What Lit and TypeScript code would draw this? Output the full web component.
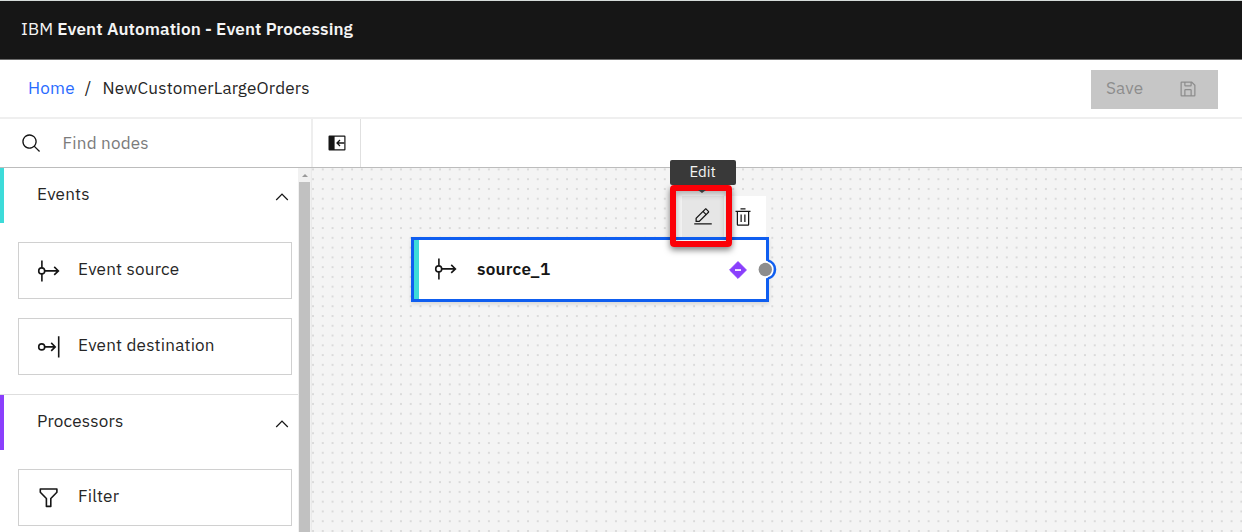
import { LitElement, html, css, svg } from "lit";
import { customElement } from "lit/decorators.js";

const searchIcon = html`<svg class="i-search" viewBox="0 0 32 32"><path d="M29,27.5859l-7.5521-7.5521a11.0177,11.0177,0,1,0-1.4141,1.4141L27.5859,29ZM4,13a9,9,0,1,1,9,9A9.01,9.01,0,0,1,4,13Z"/></svg>`;
const saveIcon = html`<svg class="i-save" viewBox="0 0 32 32"><path d="M27.71,9.29l-5-5A1,1,0,0,0,22,4H6A2,2,0,0,0,4,6V26a2,2,0,0,0,2,2H26a2,2,0,0,0,2-2V10A1,1,0,0,0,27.71,9.29ZM12,6h8v4H12Zm8,20H12V18h8Zm2,0V18a2,2,0,0,0-2-2H12a2,2,0,0,0-2,2v8H6V6h4v4a2,2,0,0,0,2,2h8a2,2,0,0,0,2-2V6.41l4,4V26Z"/></svg>`;
const editIcon = html`<svg class="i-tool" viewBox="0 0 32 32"><path d="M2 26H30V28H2zM25.4 9c.8-.8.8-2 0-2.8l-3.6-3.6c-.8-.8-2-.8-2.8 0l-15 15V24h6.4L25.4 9zM20.4 4L24 7.6l-3 3L17.4 7 20.4 4zM6 22v-3.6l10-10 3.6 3.6-10 10H6z"/></svg>`;
const trashIcon = html`<svg class="i-tool" viewBox="0 0 32 32"><path d="M12 12H14V24H12zM18 12H20V24H18zM4 6V8H6V28a2 2 0 002 2H24a2 2 0 002-2V8h2V6zM8 28V8H24V28zM12 2H20V4H12z"/></svg>`;
const chevronUp = html`<svg class="i-chevron" viewBox="0 0 16 16"><path d="M8 5L13 10 12.3 10.7 8 6.4 3.7 10.7 3 10z"/></svg>`;
const panelIcon = html`<svg class="i-panel" viewBox="0 0 18 16"><path d="M1.5 0.5h15a1 1 0 0 1 1 1v13a1 1 0 0 1-1 1h-15a1 1 0 0 1-1-1v-13a1 1 0 0 1 1-1zM6.6 1.7v12.6h9.7V1.7z" fill-rule="evenodd"/><path d="M16.3 8H9.2M12 5L9 8l3 3" fill="none" stroke="#161616" stroke-width="1.3"/></svg>`;

const glyphs = {
  source: svg`<path d="M5.9 2.5v7.2M5.9 15.9v7.6M9 12.9h13.3M18.2 8.9l4.2 4-4.2 4"/><circle cx="5.7" cy="12.9" r="3"/>`,
  destination: svg`<path d="M8.8 12.9h9.8M15.2 8.9l4 4-4 4M22.7 2.3v21.3"/><circle cx="5.7" cy="12.9" r="3"/>`,
  filter: svg`<path d="M4.3 4h16.6v3.3l-6.1 6.2v7.9H10.4v-7.9L4.3 7.3z" stroke-linejoin="round"/>`,
};
type Glyph = keyof typeof glyphs;
const glyph = (name: Glyph) => html`<svg class="i-glyph" viewBox="0 0 26 26">${glyphs[name]}</svg>`;

const groups: { title: string; tone: string; items: { label: string; icon: Glyph }[] }[] = [
  {
    title: "Events",
    tone: "events",
    items: [
      { label: "Event source", icon: "source" },
      { label: "Event destination", icon: "destination" },
    ],
  },
  { title: "Processors", tone: "processors", items: [{ label: "Filter", icon: "filter" }] },
];

@customElement("app-root")
export class AppRoot extends LitElement {
  static styles = css`
    :host {
      display: flex; flex-direction: column; box-sizing: border-box;
      width: 100%; height: 532px; overflow: hidden; background: #fff;
      color: #262626; font: 17.1px/24px "IBM Plex Sans", Roboto, "Liberation Sans", sans-serif;
      letter-spacing: 0.19px; white-space: nowrap;
    }
    * { box-sizing: border-box; }
    svg { display: block; flex: none; fill: #161616; }
    .i-search { width: 21px; height: 21px; }
    .i-save { width: 20px; height: 20px; fill: #8d8d8d; }
    .i-tool { width: 20px; height: 20px; }
    .i-chevron { width: 20px; height: 20px; }
    .i-panel { width: 18px; height: 16px; margin-bottom: 1px; }
    .i-glyph { width: 26px; height: 26px; fill: none; stroke: #161616; stroke-width: 1.6; }

    .header {
      flex: none; height: 60px; padding: 16px 0 0 21px; display: flex; gap: 4px; letter-spacing: 0.1px;
      background: #161616; color: #f4f4f4; border-top: 1px solid #d5dbd9; border-bottom: 1px solid #6b6b6b;
    }
    .product { font-weight: 600; }
    .crumbs {
      flex: none; height: 59px; display: flex; align-items: center; padding: 1px 24px 0 28px;
      border-bottom: 2px solid #efefef;
    }
    .crumbs a { color: #2a6bff; }
    .crumbs span, .crumbs a { margin-bottom: 2px; }
    .crumbs .slash { margin: 0 11px 2px 10px; }
    .save {
      margin-left: auto; width: 127.5px; height: 39px; display: flex; align-items: center;
      justify-content: space-between; padding: 0 20px 0 15.5px; background: #c6c6c6; color: #8d8d8d;
    }
    .tools { flex: none; height: 49px; display: flex; border-bottom: 1px solid #bcbcbc; }
    .find {
      width: 313px; display: flex; align-items: center; gap: 21px; padding-left: 20.6px;
      border-right: 2px solid #eeeeee; color: #7b7b7b;
    }
    .toggle {
      width: 48px; display: flex; align-items: center; justify-content: center;
      border-right: 1px solid #e0e0e0;
    }
    .main { flex: 1; min-height: 0; display: flex; }
    .side { flex: none; width: 298px; overflow: hidden; }
    .group { padding-bottom: 19px; border-bottom: 1px solid #dedede; }
    .group-head {
      height: 55px; display: flex; justify-content: space-between; padding: 14px 6px 0 33px;
      border-left: 4px solid;
    }
    .group-head .i-chevron { margin-top: 4.6px; }
    .events { border-left-color: #3ddbd9; }
    .processors { border-left-color: #8a3ffc; }
    .cards { display: flex; flex-direction: column; gap: 19px; padding: 19px 6px 0 18px; }
    .card { height: 57px; display: flex; gap: 16px; padding: 14px 0 0 17px; border: 1px solid #d0d0d0; }
    .card .i-glyph { margin-top: 1px; }
    .scroll {
      flex: none; width: 13px; display: flex; flex-direction: column; align-items: center;
      background: #f1f1f1;
    }
    .up { margin: 6px 0 5px; border: 3px solid transparent; border-top: 0; border-bottom: 3px solid #9a9a9a; }
    .thumb { flex: 1; width: 11px; background: #c1c1c1; }

    .canvas { flex: 1; position: relative; border-left: 1px solid #eaeaea; background: #f4f4f4; }
    .dots { width: 100%; height: 100%; }
    .dots circle { fill: #d6d6d6; }
    .node {
      position: absolute; left: 99px; top: 69px; width: 358px; height: 65px; display: flex;
      align-items: center; background: #fff; border: 3px solid #0f5ef0;
      box-shadow: 0 2px 4px rgba(0, 0, 0, 0.12); color: #161616; font-weight: 600;
    }
    .stripe { width: 5px; height: 59px; background: #3ddbd9; margin-right: 14px; }
    .node .i-glyph { margin-right: 18px; margin-bottom: 1px; }
    .name { margin-bottom: 2px; }
    .badge { width: 18px; height: 18px; margin-left: auto; margin-right: 19px; }
    .port { position: absolute; left: 443px; top: 91px; width: 22px; height: 22px; }
    .actions { position: absolute; left: 370px; top: 28px; width: 84px; height: 41px; display: flex; background: #fff; }
    .action { width: 42px; display: flex; align-items: center; justify-content: center; }
    .on { background: #e6e6e6; }
    .on svg { margin-right: 1px; }
    .action:last-child { padding-right: 3.4px; }
    .marker {
      position: absolute; left: 358px; top: 17px; width: 62px; height: 62px;
      border: 6px solid #fb0007; border-radius: 4px;
      box-shadow: 0 3px 6px rgba(0, 0, 0, 0.5), inset 0 3px 6px rgba(0, 0, 0, 0.3);
    }
    .tip {
      position: absolute; left: 357.6px; top: -7.6px; width: 66px; height: 25px; border-radius: 2px;
      background: #393939; color: #f4f4f4; font-size: 15px; line-height: 24px; text-align: center;
      letter-spacing: 0;
    }
    .caret { position: absolute; left: 386px; top: 22px; border: 4px solid transparent; border-bottom: 0; border-top: 3px solid #393939; }
  `;

  render() {
    return html`
      <div class="header"><span>IBM</span><span class="product">Event Automation - Event Processing</span></div>
      <div class="crumbs">
        <a>Home</a><span class="slash">/</span><span>NewCustomerLargeOrders</span>
        <div class="save"><span>Save</span>${saveIcon}</div>
      </div>
      <div class="tools">
        <div class="find">${searchIcon}<span>Find nodes</span></div>
        <div class="toggle">${panelIcon}</div>
      </div>
      <div class="main">
        <div class="side">
          ${groups.map(
            (g) => html`<div class="group">
              <div class="group-head ${g.tone}"><span>${g.title}</span>${chevronUp}</div>
              <div class="cards">
                ${g.items.map((i) => html`<div class="card">${glyph(i.icon)}<span>${i.label}</span></div>`)}
              </div>
            </div>`
          )}
        </div>
        <div class="scroll"><span class="up"></span><span class="thumb"></span></div>
        <div class="canvas">
          <svg class="dots">
            <defs>
              <pattern id="grid" x="-3.9" y="-3.5" width="9.772" height="9.772" patternUnits="userSpaceOnUse">
                <circle cx="4.9" cy="4.9" r="1.1"/>
              </pattern>
            </defs>
            <rect width="100%" height="100%" fill="url(#grid)"/>
          </svg>
          <div class="actions"><div class="action on">${editIcon}</div><div class="action">${trashIcon}</div></div>
          <div class="node">
            <span class="stripe"></span>${glyph("source")}<span class="name">source_1</span>
            <svg class="badge" viewBox="0 0 18 18"><path d="M9 0.6L17.4 9 9 17.4 0.6 9z" fill="#8a3ffc" stroke="#8a3ffc" stroke-linejoin="round"/><path d="M6 8.2h6v1.7H6z" fill="#fff"/></svg>
          </div>
          <svg class="port" viewBox="0 0 22 22">
            <circle cx="10" cy="10.5" r="9" fill="#fff"/>
            <path d="M13 1.5a9.3 9.3 0 0 1 0 18" fill="none" stroke="#0f5ef0" stroke-width="2.6"/>
            <circle cx="10.3" cy="10.5" r="6.7" fill="#8d8d8d"/>
          </svg>
          <div class="marker"></div>
          <span class="caret"></span>
          <div class="tip">Edit</div>
        </div>
      </div>
    `;
  }
}
